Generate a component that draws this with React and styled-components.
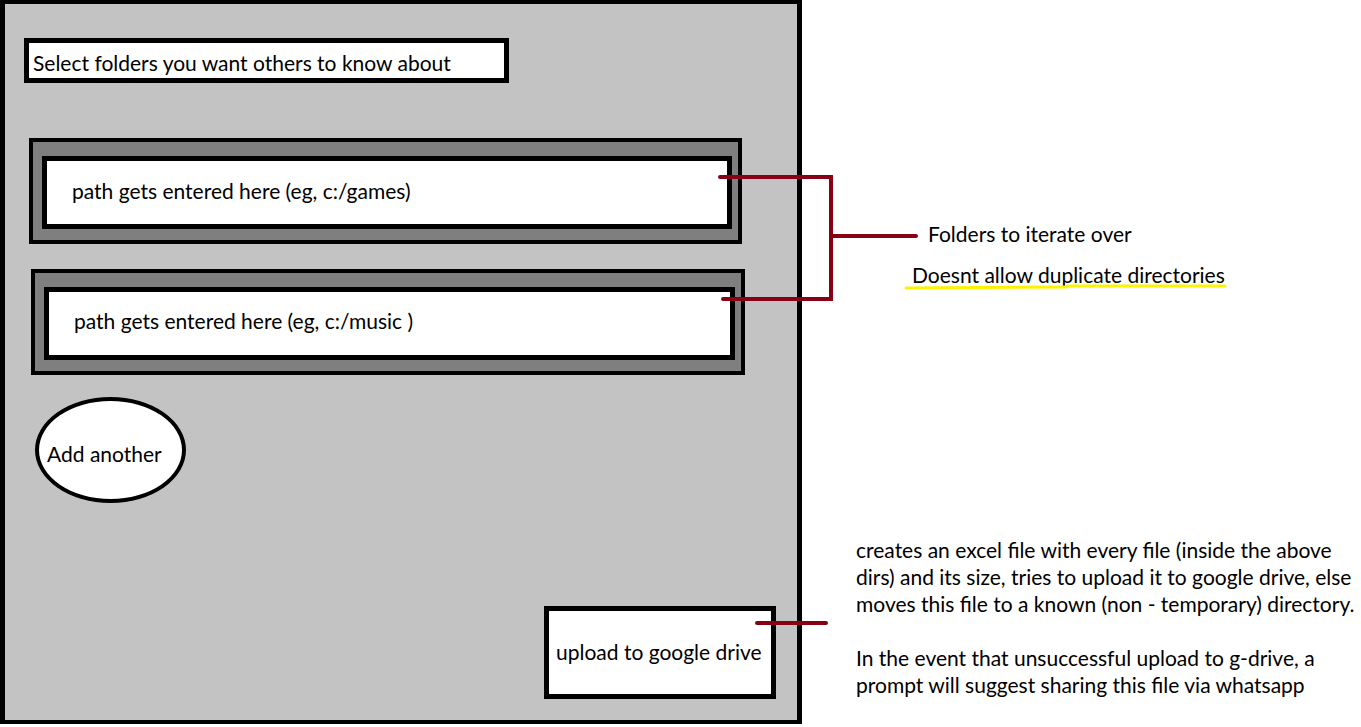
import React from 'react';
import styled, { createGlobalStyle } from 'styled-components';

const GlobalStyle = createGlobalStyle`
  html, body {
    margin: 0;
    padding: 0;
    background: #ffffff;
  }
  body {
    font-family: Lato, "Open Sans", "Liberation Sans", sans-serif;
    color: #000000;
  }
`;

const StyledPage = styled.div`
  position: relative;
  display: flex;
  flex-direction: row;
  width: 1361px;
  height: 727px;
  overflow: hidden;
  font-size: 21px;
`;

const StyledPanel = styled.div`
  box-sizing: border-box;
  width: 802px;
  height: 724px;
  flex: 0 0 auto;
  display: flex;
  flex-direction: column;
  align-items: flex-start;
  background-color: #c3c3c3;
  border-style: solid;
  border-color: #000000;
  border-width: 4px 5px 4px 5px;
  padding: 34px 21px 21px 19px;
`;

const StyledTitle = styled.div`
  box-sizing: border-box;
  width: 485px;
  height: 45px;
  display: flex;
  align-items: center;
  background: #ffffff;
  border: 5px solid #000000;
  padding: 3px 0 0 4px;
  white-space: nowrap;
`;

const StyledPathFrame = styled.div`
  box-sizing: border-box;
  width: ${(props) => props.width}px;
  height: 106px;
  margin-top: ${(props) => props.gap}px;
  margin-left: ${(props) => props.indent}px;
  background: #7f7f7f;
  border: 4px solid #000000;
  padding: 14px 6px 11px 9px;
`;

const StyledPathInput = styled.div`
  box-sizing: border-box;
  height: 100%;
  display: flex;
  align-items: center;
  background: #ffffff;
  border: 5px solid #000000;
  padding: 0 0 ${(props) => props.lift}px 25px;
  white-space: nowrap;
`;

const StyledAddButton = styled.div`
  box-sizing: border-box;
  width: 151px;
  height: 106px;
  margin: 22px 0 0 11px;
  display: flex;
  align-items: center;
  background: #ffffff;
  border: 4px solid #000000;
  border-radius: 50%;
  padding: 7px 0 0 8px;
  white-space: nowrap;
`;

const StyledUploadButton = styled.div`
  box-sizing: border-box;
  width: 232px;
  height: 93px;
  margin-top: auto;
  align-self: flex-end;
  display: flex;
  align-items: center;
  background: #ffffff;
  border: 5px solid #000000;
  padding: 0 0 2px 7px;
  white-space: nowrap;
`;

const StyledNotes = styled.div`
  display: flex;
  flex-direction: column;
  align-items: flex-start;
  padding-top: 221px;
`;

const StyledNote = styled.div`
  line-height: 26px;
  margin-top: ${(props) => props.gap || 0}px;
  margin-left: ${(props) => props.indent}px;
  white-space: nowrap;
`;

const StyledDescription = styled.div`
  margin-top: 248px;
  margin-left: 54px;
  line-height: 27px;
  white-space: nowrap;
`;

const StyledParagraph = styled.p`
  margin: 0 0 27px 0;
`;

const StyledOverlay = styled.svg`
  position: absolute;
  left: 0;
  top: 0;
  pointer-events: none;
`;

const Connectors = () => (
  <StyledOverlay width="1361" height="727" viewBox="0 0 1361 727">
    <g stroke="#880015" strokeWidth="4" strokeLinecap="round" fill="none">
      <polyline points="720,177 831,177 831,299 723,299" strokeLinejoin="miter" />
      <line x1="831" y1="236" x2="916" y2="236" />
      <line x1="757" y1="623" x2="826" y2="623" />
    </g>
    <g stroke="#fff200" strokeWidth="3" strokeLinecap="round" fill="none">
      <line x1="906" y1="288" x2="1067" y2="287" />
      <line x1="1067" y1="286" x2="1225" y2="286" />
    </g>
  </StyledOverlay>
);

const paths = [
  { text: 'path gets entered here (eg, c:/games)', width: 713, gap: 55, indent: 5, lift: 4 },
  { text: 'path gets entered here (eg, c:/music )', width: 714, gap: 25, indent: 7, lift: 6 },
];

const App = () => {
  return (
    <>
      <GlobalStyle />
      <StyledPage>
        <StyledPanel>
          <StyledTitle>Select folders you want others to know about</StyledTitle>
          {paths.map((p) => (
            <StyledPathFrame key={p.text} width={p.width} gap={p.gap} indent={p.indent}>
              <StyledPathInput lift={p.lift}>{p.text}</StyledPathInput>
            </StyledPathFrame>
          ))}
          <StyledAddButton>Add another</StyledAddButton>
          <StyledUploadButton>upload to google drive</StyledUploadButton>
        </StyledPanel>
        <StyledNotes>
          <StyledNote indent={126}>Folders to iterate over</StyledNote>
          <StyledNote indent={110} gap={15}>
            Doesnt allow duplicate directories
          </StyledNote>
          <StyledDescription>
            <StyledParagraph>
              creates an excel file with every file (inside the above
              <br />
              dirs) and its size, tries to upload it to google drive, else
              <br />
              moves this file to a known (non - temporary) directory.
            </StyledParagraph>
            <StyledParagraph>
              In the event that unsuccessful upload to g-drive, a
              <br />
              prompt will suggest sharing this file via whatsapp
            </StyledParagraph>
          </StyledDescription>
        </StyledNotes>
        <Connectors />
      </StyledPage>
    </>
  );
};

export default App;
